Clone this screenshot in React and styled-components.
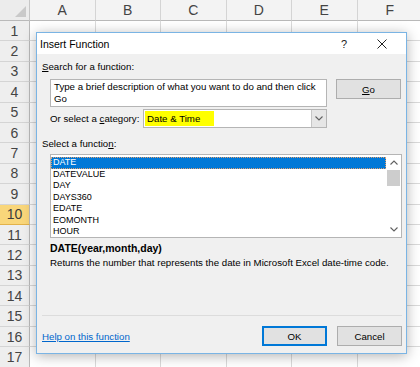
import React from 'react';
import styled, { createGlobalStyle, css } from 'styled-components';

const GlobalStyle = createGlobalStyle`
  html, body {
    margin: 0;
    padding: 0;
    background: #ffffff;
    overflow: hidden;
  }
  body {
    font-family: 'Liberation Sans', Arial, sans-serif;
  }
`;

const COLUMNS = ['A', 'B', 'C', 'D', 'E', 'F'];
const ROWS = Array.from({ length: 17 }, (_, i) => i + 1);
const ACTIVE_ROW = 10;

const FUNCTIONS = ['DATE', 'DATEVALUE', 'DAY', 'DAYS360', 'EDATE', 'EOMONTH', 'HOUR'];

const Screen = styled.div`
  position: relative;
  width: 420px;
  height: 367px;
  overflow: hidden;
`;

// ---- spreadsheet behind the dialog ----

const Sheet = styled.div`
  display: grid;
  grid-template-columns: 30px repeat(6, 65.5px);
  grid-template-rows: 21px repeat(17, 20.4px);
  background: #ffffff;
`;

const Corner = styled.div`
  position: relative;
  background: #ececec;
  border-right: 1px solid #c6c6c6;
  border-bottom: 1px solid #b9b9b9;
  box-sizing: border-box;

  &::after {
    content: '';
    position: absolute;
    right: 3px;
    bottom: 3px;
    width: 0;
    height: 0;
    border-left: 11px solid transparent;
    border-bottom: 11px solid #c9c9c9;
  }
`;

const ColHead = styled.div`
  display: flex;
  align-items: center;
  justify-content: center;
  background: #f3f3f3;
  border-right: 1px solid #d4d4d4;
  border-bottom: 1px solid #b9b9b9;
  box-sizing: border-box;
  color: #444444;
  font-size: 14px;
`;

const RowHead = styled.div`
  display: flex;
  align-items: center;
  justify-content: center;
  background: #eeeeee;
  border-right: 1px solid #b9b9b9;
  border-bottom: 1px solid #d4d4d4;
  box-sizing: border-box;
  color: #444444;
  font-size: 14px;

  ${(p) =>
    p.active &&
    css`
      background: #f9d67a;
      border-bottom: 1px solid #e2b24a;
      color: #3c3c3c;
    `}
`;

const Cell = styled.div`
  border-right: 1px solid #dadada;
  border-bottom: 1px solid #dadada;
  box-sizing: border-box;
`;

// ---- dialog ----

const Dialog = styled.div`
  position: absolute;
  left: 36px;
  top: 32px;
  width: 371px;
  height: 322px;
  box-sizing: border-box;
  border: 1px solid #7ab4e4;
  background: #f0f0f0;
  box-shadow: 0 2px 12px rgba(0, 0, 0, 0.3);
  display: flex;
  flex-direction: column;
  font-size: 9.7px;
  color: #000000;
`;

const TitleBar = styled.div`
  display: flex;
  align-items: center;
  height: 21px;
  background: #ffffff;
  padding-left: 3px;
  font-size: 10.5px;
`;

const Title = styled.span`
  flex: 1;
`;

const TitleButton = styled.span`
  width: ${(p) => p.width}px;
  display: flex;
  justify-content: center;
  align-items: center;
  font-size: 11px;
  color: #222;
`;

const Body = styled.div`
  flex: 1;
  display: flex;
  flex-direction: column;
  padding: 0 4px 0 5px;
`;

const Label = styled.div`
  margin-top: ${(p) => p.top || 0}px;
  padding-left: ${(p) => p.indent || 0}px;
  line-height: 12px;
  font-weight: ${(p) => (p.bold ? 'bold' : 'normal')};
  font-size: ${(p) => (p.bold ? '10.5px' : 'inherit')};
`;

const Key = styled.span`
  text-decoration: underline;
`;

const SearchRow = styled.div`
  display: flex;
  gap: 9px;
  margin-top: 6px;
  padding-left: 8px;
`;

const SearchBox = styled.div`
  width: 277px;
  height: 28px;
  box-sizing: border-box;
  background: #ffffff;
  border: 1px solid #b5b5b5;
  padding: 1px 3px;
  line-height: 12px;
`;

const Button = styled.div`
  width: 65px;
  height: 20px;
  box-sizing: border-box;
  display: flex;
  align-items: center;
  justify-content: center;
  background: #e1e1e1;
  border: 1px solid ${(p) => (p.primary ? '#0078d7' : '#adadad')};
  box-shadow: ${(p) => (p.primary ? 'inset 0 0 0 1px #0078d7' : 'none')};
`;

const CategoryRow = styled.div`
  display: flex;
  align-items: center;
  margin-top: 2px;
  padding-left: 8px;
`;

const CategoryLabel = styled.span`
  width: 93px;
`;

const Select = styled.div`
  width: 184px;
  height: 19px;
  box-sizing: border-box;
  display: flex;
  background: #ffffff;
  border: 1px solid #b5b5b5;
`;

const SelectValue = styled.div`
  flex: 1;
  display: flex;
  align-items: stretch;
  padding: 1px 0 1px 1px;
`;

const Highlight = styled.span`
  display: flex;
  align-items: center;
  background: #ffff00;
  padding: 0 3px 0 2px;
  width: 64px;
`;

const SelectArrow = styled.div`
  width: 14px;
  display: flex;
  align-items: center;
  justify-content: center;
  background: #e6e6e6;
  border-left: 1px solid #c6c6c6;
`;

const ListBox = styled.div`
  display: flex;
  margin: 4px 0 0 8px;
  width: 352px;
  height: 84px;
  box-sizing: border-box;
  background: #ffffff;
  border: 1px solid #b5b5b5;
`;

const Items = styled.div`
  flex: 1;
  padding-top: 2px;
`;

const Item = styled.div`
  height: 11.5px;
  line-height: 11.5px;
  padding-left: 2px;
  font-size: 9px;
  color: ${(p) => (p.selected ? '#ffffff' : '#000000')};
  background: ${(p) => (p.selected ? '#0078d7' : 'transparent')};
  outline: ${(p) => (p.selected ? '1px dotted #e0a070' : 'none')};
  outline-offset: -1px;
`;

const Scrollbar = styled.div`
  width: 15px;
  display: flex;
  flex-direction: column;
  align-items: center;
  background: #ffffff;
`;

const ScrollArrow = styled.div`
  height: 15px;
  display: flex;
  align-items: center;
  justify-content: center;
`;

const Thumb = styled.div`
  width: 13px;
  height: 16px;
  background: #cdcdcd;
`;

const ScrollTrack = styled.div`
  flex: 1;
`;

const Spacer = styled.div`
  flex: 1;
`;

const Separator = styled.div`
  height: 1px;
  background: #dcdcdc;
  width: 360px;
`;

const Footer = styled.div`
  display: flex;
  align-items: center;
  gap: 10px;
  padding: 10px 0 7px 0;
`;

const HelpLink = styled.a`
  flex: 1;
  color: #0066cc;
  text-decoration: underline;
`;

const Chevron = ({ up }) => (
  <svg width="8" height="5" viewBox="0 0 8 5">
    <path
      d={up ? 'M0.5 4.5 L4 1 L7.5 4.5' : 'M0.5 0.5 L4 4 L7.5 0.5'}
      fill="none"
      stroke="#606060"
      strokeWidth="1.1"
    />
  </svg>
);

const CloseIcon = () => (
  <svg width="10" height="10" viewBox="0 0 10 10">
    <path d="M0.5 0.5 L9.5 9.5 M9.5 0.5 L0.5 9.5" stroke="#222" strokeWidth="1" />
  </svg>
);

const App = () => (
  <Screen>
    <GlobalStyle />
    <Sheet>
      <Corner />
      {COLUMNS.map((c) => (
        <ColHead key={c}>{c}</ColHead>
      ))}
      {ROWS.map((r) => (
        <React.Fragment key={r}>
          <RowHead active={r === ACTIVE_ROW}>{r}</RowHead>
          {COLUMNS.map((c) => (
            <Cell key={c} />
          ))}
        </React.Fragment>
      ))}
    </Sheet>

    <Dialog>
      <TitleBar>
        <Title>Insert Function</Title>
        <TitleButton width={28}>?</TitleButton>
        <TitleButton width={48}>
          <CloseIcon />
        </TitleButton>
      </TitleBar>
      <Body>
        <Label top={7}>
          <Key>S</Key>earch for a function:
        </Label>
        <SearchRow>
          <SearchBox>
            Type a brief description of what you want to do and then click Go
          </SearchBox>
          <Button>
            <Key>G</Key>o
          </Button>
        </SearchRow>
        <CategoryRow>
          <CategoryLabel>
            Or select a <Key>c</Key>ategory:
          </CategoryLabel>
          <Select>
            <SelectValue>
              <Highlight>Date &amp; Time</Highlight>
            </SelectValue>
            <SelectArrow>
              <Chevron />
            </SelectArrow>
          </Select>
        </CategoryRow>
        <Label top={10}>
          Select a functio<Key>n</Key>:
        </Label>
        <ListBox>
          <Items>
            {FUNCTIONS.map((f, i) => (
              <Item key={f} selected={i === 0}>
                {f}
              </Item>
            ))}
          </Items>
          <Scrollbar>
            <ScrollArrow>
              <Chevron up />
            </ScrollArrow>
            <Thumb />
            <ScrollTrack />
            <ScrollArrow>
              <Chevron />
            </ScrollArrow>
          </Scrollbar>
        </ListBox>
        <Label top={4} indent={8} bold>
          DATE(year,month,day)
        </Label>
        <Label top={3} indent={8}>
          Returns the number that represents the date in Microsoft Excel date-time code.
        </Label>
        <Spacer />
        <Separator />
        <Footer>
          <HelpLink>Help on this function</HelpLink>
          <Button primary>OK</Button>
          <Button>Cancel</Button>
        </Footer>
      </Body>
    </Dialog>
  </Screen>
);

export default App;
